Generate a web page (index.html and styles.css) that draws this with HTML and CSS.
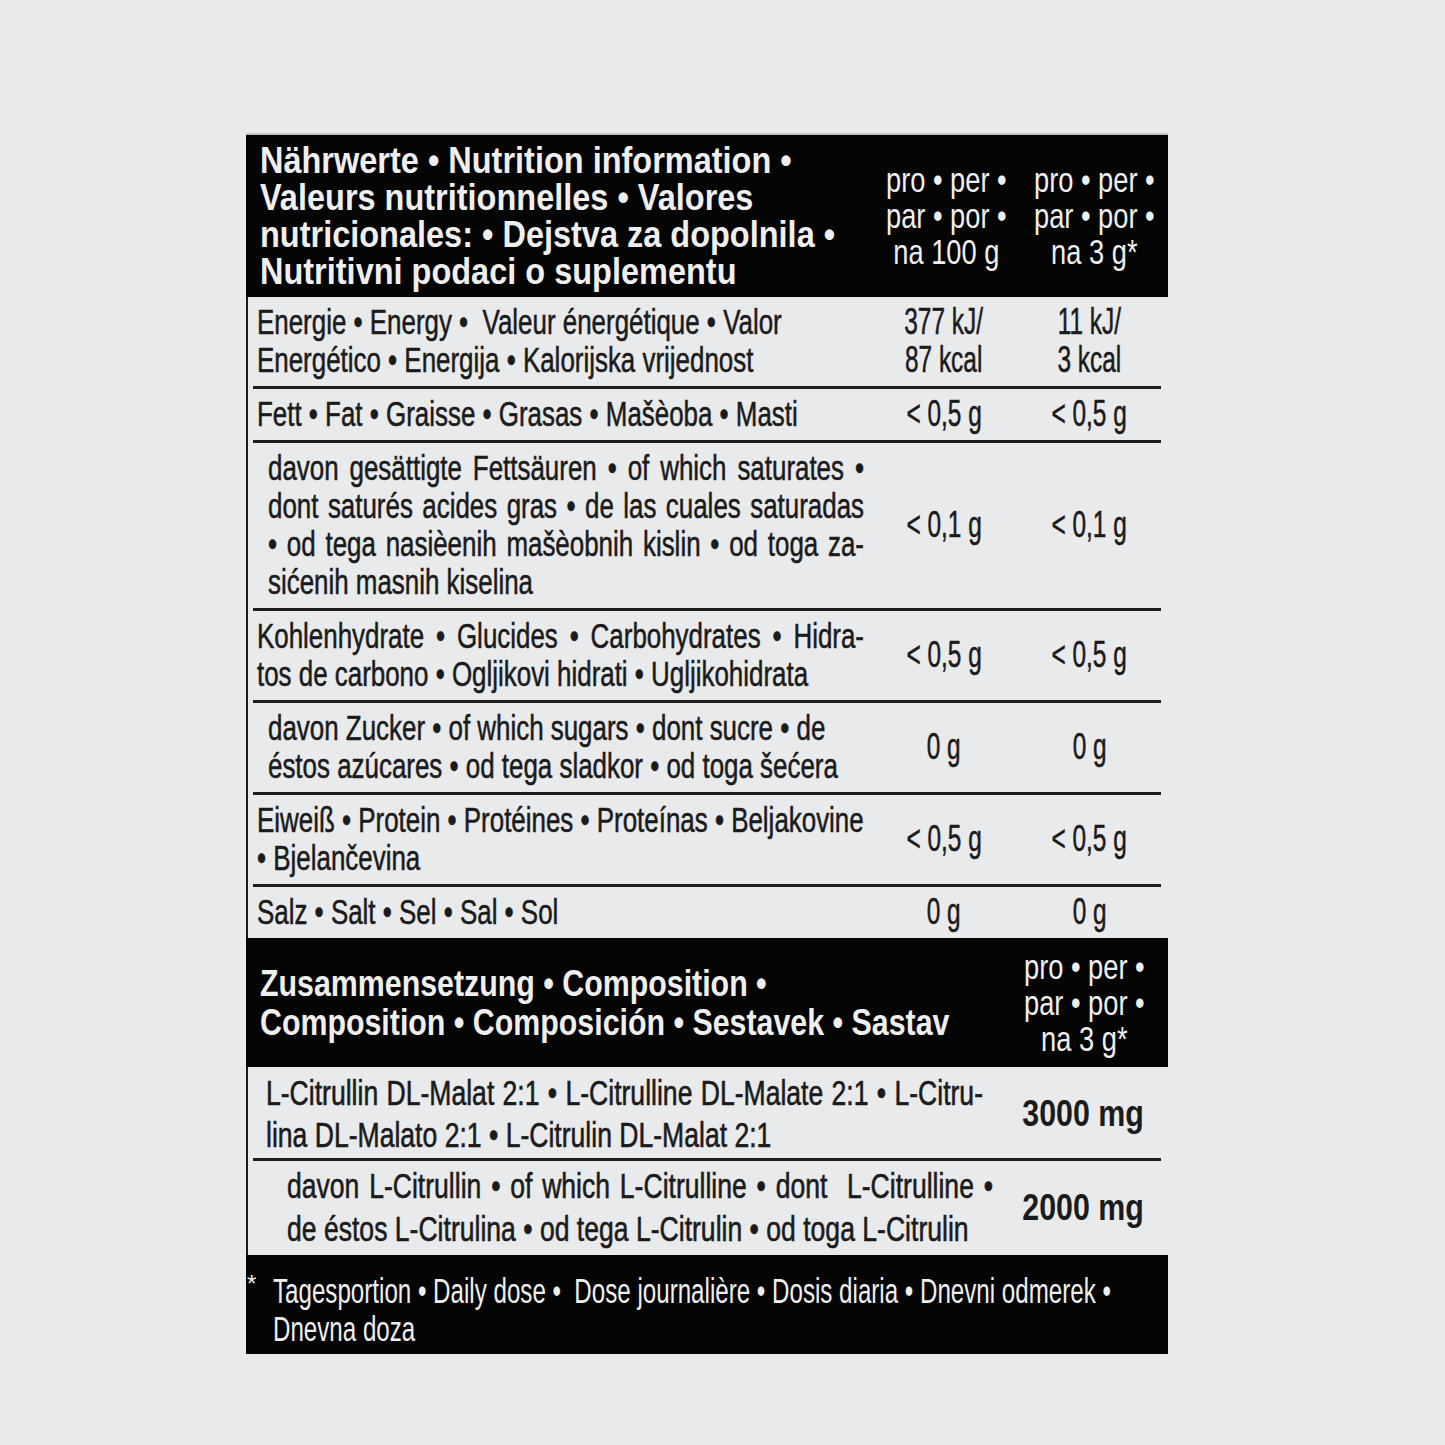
FILE: index.html
```html
<!DOCTYPE html>
<html lang="de">
<head>
<meta charset="utf-8">
<title>Nährwerte</title>
<link rel="stylesheet" href="styles.css">
</head>
<body>
<div class="panel">
  <div class="nhead">
    <div class="nh-title"><div class="sx">Nährwerte • Nutrition information •<br>Valeurs nutritionnelles • Valores<br>nutricionales: • Dejstva za dopolnila •<br>Nutritivni podaci o suplementu</div></div>
    <div class="nh-col"><span class="sx">pro • per •<br>par • por •<br>na 100 g</span></div>
    <div class="nh-col"><span class="sx">pro • per •<br>par • por •<br>na 3 g*</span></div>
  </div>
  <div class="nbody">
    <div class="row">
      <div class="lbl"><div class="sx"><span class="ln">Energie • Energy •&nbsp; Valeur énergétique • Valor</span><span class="ln">Energético • Energija • Kalorijska vrijednost</span></div></div>
      <div class="val"><span class="sx">377 kJ/<br>87 kcal</span></div>
      <div class="val"><span class="sx">11 kJ/<br>3 kcal</span></div>
    </div>
    <div class="row">
      <div class="lbl"><div class="sx"><span class="ln">Fett • Fat • Graisse • Grasas • Mašèoba • Masti</span></div></div>
      <div class="val"><span class="sx">&lt; 0,5 g</span></div>
      <div class="val"><span class="sx">&lt; 0,5 g</span></div>
    </div>
    <div class="row">
      <div class="lbl sub"><div class="sx"><span class="ln j">davon gesättigte Fettsäuren • of which saturates •</span><span class="ln j">dont saturés acides gras • de las cuales saturadas</span><span class="ln j">• od tega nasièenih mašèobnih kislin • od toga za-</span><span class="ln">sićenih masnih kiselina</span></div></div>
      <div class="val"><span class="sx">&lt; 0,1 g</span></div>
      <div class="val"><span class="sx">&lt; 0,1 g</span></div>
    </div>
    <div class="row">
      <div class="lbl"><div class="sx"><span class="ln j">Kohlenhydrate • Glucides • Carbohydrates • Hidra-</span><span class="ln">tos de carbono • Ogljikovi hidrati • Ugljikohidrata</span></div></div>
      <div class="val"><span class="sx">&lt; 0,5 g</span></div>
      <div class="val"><span class="sx">&lt; 0,5 g</span></div>
    </div>
    <div class="row">
      <div class="lbl sub"><div class="sx"><span class="ln">davon Zucker • of which sugars • dont sucre • de</span><span class="ln">éstos azúcares • od tega sladkor • od toga šećera</span></div></div>
      <div class="val"><span class="sx">0 g</span></div>
      <div class="val"><span class="sx">0 g</span></div>
    </div>
    <div class="row">
      <div class="lbl"><div class="sx"><span class="ln">Eiweiß • Protein • Protéines • Proteínas • Beljakovine</span><span class="ln">• Bjelančevina</span></div></div>
      <div class="val"><span class="sx">&lt; 0,5 g</span></div>
      <div class="val"><span class="sx">&lt; 0,5 g</span></div>
    </div>
    <div class="row last">
      <div class="lbl"><div class="sx"><span class="ln">Salz • Salt • Sel • Sal • Sol</span></div></div>
      <div class="val"><span class="sx">0 g</span></div>
      <div class="val"><span class="sx">0 g</span></div>
    </div>
  </div>
  <div class="chead">
    <div class="ch-title"><div class="sx">Zusammensetzung • Composition •<br>Composition • Composición • Sestavek • Sastav</div></div>
    <div class="nh-col"><span class="sx">pro • per •<br>par • por •<br>na 3 g*</span></div>
  </div>
  <div class="cbody">
    <div class="crow">
      <div class="clbl c1"><div class="sx"><span class="ln j">L-Citrullin DL-Malat 2:1 • L-Citrulline DL-Malate 2:1 • L-Citru-</span><span class="ln">lina DL-Malato 2:1 • L-Citrulin DL-Malat 2:1</span></div></div>
      <div class="cval"><span class="sx">3000 mg</span></div>
    </div>
    <div class="crow last">
      <div class="clbl c2"><div class="sx"><span class="ln j">davon L-Citrullin • of which L-Citrulline • dont&nbsp; L-Citrulline •</span><span class="ln">de éstos L-Citrulina • od tega L-Citrulin • od toga L-Citrulin</span></div></div>
      <div class="cval"><span class="sx">2000 mg</span></div>
    </div>
  </div>
  <div class="foot">
    <span class="star">*</span>
    <div class="ftext"><div class="sx">Tagesportion • Daily dose •&nbsp; Dose journalière • Dosis diaria • Dnevni odmerek •<br>Dnevna doza</div></div>
  </div>
</div>
</body>
</html>
```

FILE: styles.css
```css
html, body {
  margin: 0;
  padding: 0;
}
body {
  background: #e9eaec;
  padding: 133px 0 0 246px;
  font-family: "Liberation Sans", Arial, sans-serif;
  color: #1b1b1b;
}
.panel {
  width: 922px;
  display: flex;
  flex-direction: column;
  border-top: 2px solid #c2c3c5;
  overflow: hidden;
}
.ln {
  display: block;
  white-space: nowrap;
}
.ln.j {
  white-space: normal;
  text-align: justify;
  text-align-last: justify;
}

/* black headers */
.nhead {
  background: #050505;
  color: #efefef;
  display: grid;
  grid-template-columns: 624px 148px 150px;
  align-items: center;
  height: 162px;
}
.nh-title {
  min-width: 0;
  padding-left: 14px;
  font-weight: bold;
  font-size: 36.5px;
  line-height: 37px;
  white-space: nowrap;
}
.nh-title .sx {
  transform: scaleX(0.89);
  transform-origin: 0 0;
}
.nh-col {
  min-width: 0;
  text-align: center;
  font-size: 34.5px;
  line-height: 36px;
  white-space: nowrap;
}
.nh-col .sx {
  display: inline-block;
  transform: scaleX(0.79);
}

/* nutrition body */
.nbody, .cbody {
  border-left: 2px solid #1b1b1b;
  padding-left: 5px;
  padding-right: 7px;
}
.row {
  display: grid;
  grid-template-columns: 617px 148px 143px;
  align-items: center;
  padding: 6px 0 7px;
  border-bottom: 3px solid #1e1e1e;
}
.row.last {
  border-bottom: none;
  padding-bottom: 7px;
}
.lbl {
  min-width: 0;
  padding-left: 4px;
  padding-right: 6px;
  font-size: 35.5px;
  line-height: 38px;
  -webkit-text-stroke: 0.55px #1b1b1b;
}
.lbl.sub {
  padding-left: 15px;
}
.lbl .sx {
  width: calc(100% / 0.73);
  transform: scaleX(0.73);
  transform-origin: 0 0;
}
.val {
  min-width: 0;
  text-align: center;
  font-size: 37px;
  line-height: 38px;
  white-space: nowrap;
  -webkit-text-stroke: 0.55px #1b1b1b;
}
.val .sx {
  display: inline-block;
  transform: scaleX(0.66);
}

/* composition header */
.chead {
  background: #050505;
  color: #efefef;
  display: grid;
  grid-template-columns: 762px 153px;
  align-items: center;
  padding-right: 7px;
  height: 129px;
}
.ch-title {
  min-width: 0;
  padding-left: 14px;
  font-weight: bold;
  font-size: 37px;
  line-height: 39px;
  white-space: nowrap;
}
.ch-title .sx {
  transform: scaleX(0.82);
  transform-origin: 0 0;
}

/* composition body */
.crow {
  display: grid;
  grid-template-columns: 752px 156px;
  align-items: center;
  padding: 5px 0 2px;
  border-bottom: 3px solid #1e1e1e;
}
.crow.last {
  border-bottom: none;
  padding: 4px 0 4px;
}
.clbl {
  min-width: 0;
  font-size: 34.5px;
  line-height: 42px;
  -webkit-text-stroke: 0.6px #1b1b1b;
}
.crow.last .clbl {
  line-height: 43px;
}
.clbl .sx {
  width: calc(100% / 0.77);
  transform: scaleX(0.77);
  transform-origin: 0 0;
}
.clbl.c1 {
  padding-left: 13px;
  padding-right: 22px;
}
.clbl.c2 {
  padding-left: 34px;
  padding-right: 12px;
}
.cval {
  min-width: 0;
  text-align: center;
  font-weight: bold;
  font-size: 37px;
  white-space: nowrap;
}
.cval .sx {
  display: inline-block;
  transform: scaleX(0.82);
}

/* footer */
.foot {
  background: #050505;
  color: #efefef;
  display: flex;
  align-items: flex-start;
  height: 99px;
  box-sizing: border-box;
  padding-top: 17px;
}
.star {
  width: 27px;
  flex: none;
  font-size: 24px;
  line-height: 24px;
  padding-left: 1px;
  box-sizing: border-box;
}
.ftext {
  flex: 1;
  min-width: 0;
  font-size: 35.5px;
  line-height: 38px;
  white-space: nowrap;
}
.ftext .sx {
  transform: scaleX(0.68);
  transform-origin: 0 0;
}
```
